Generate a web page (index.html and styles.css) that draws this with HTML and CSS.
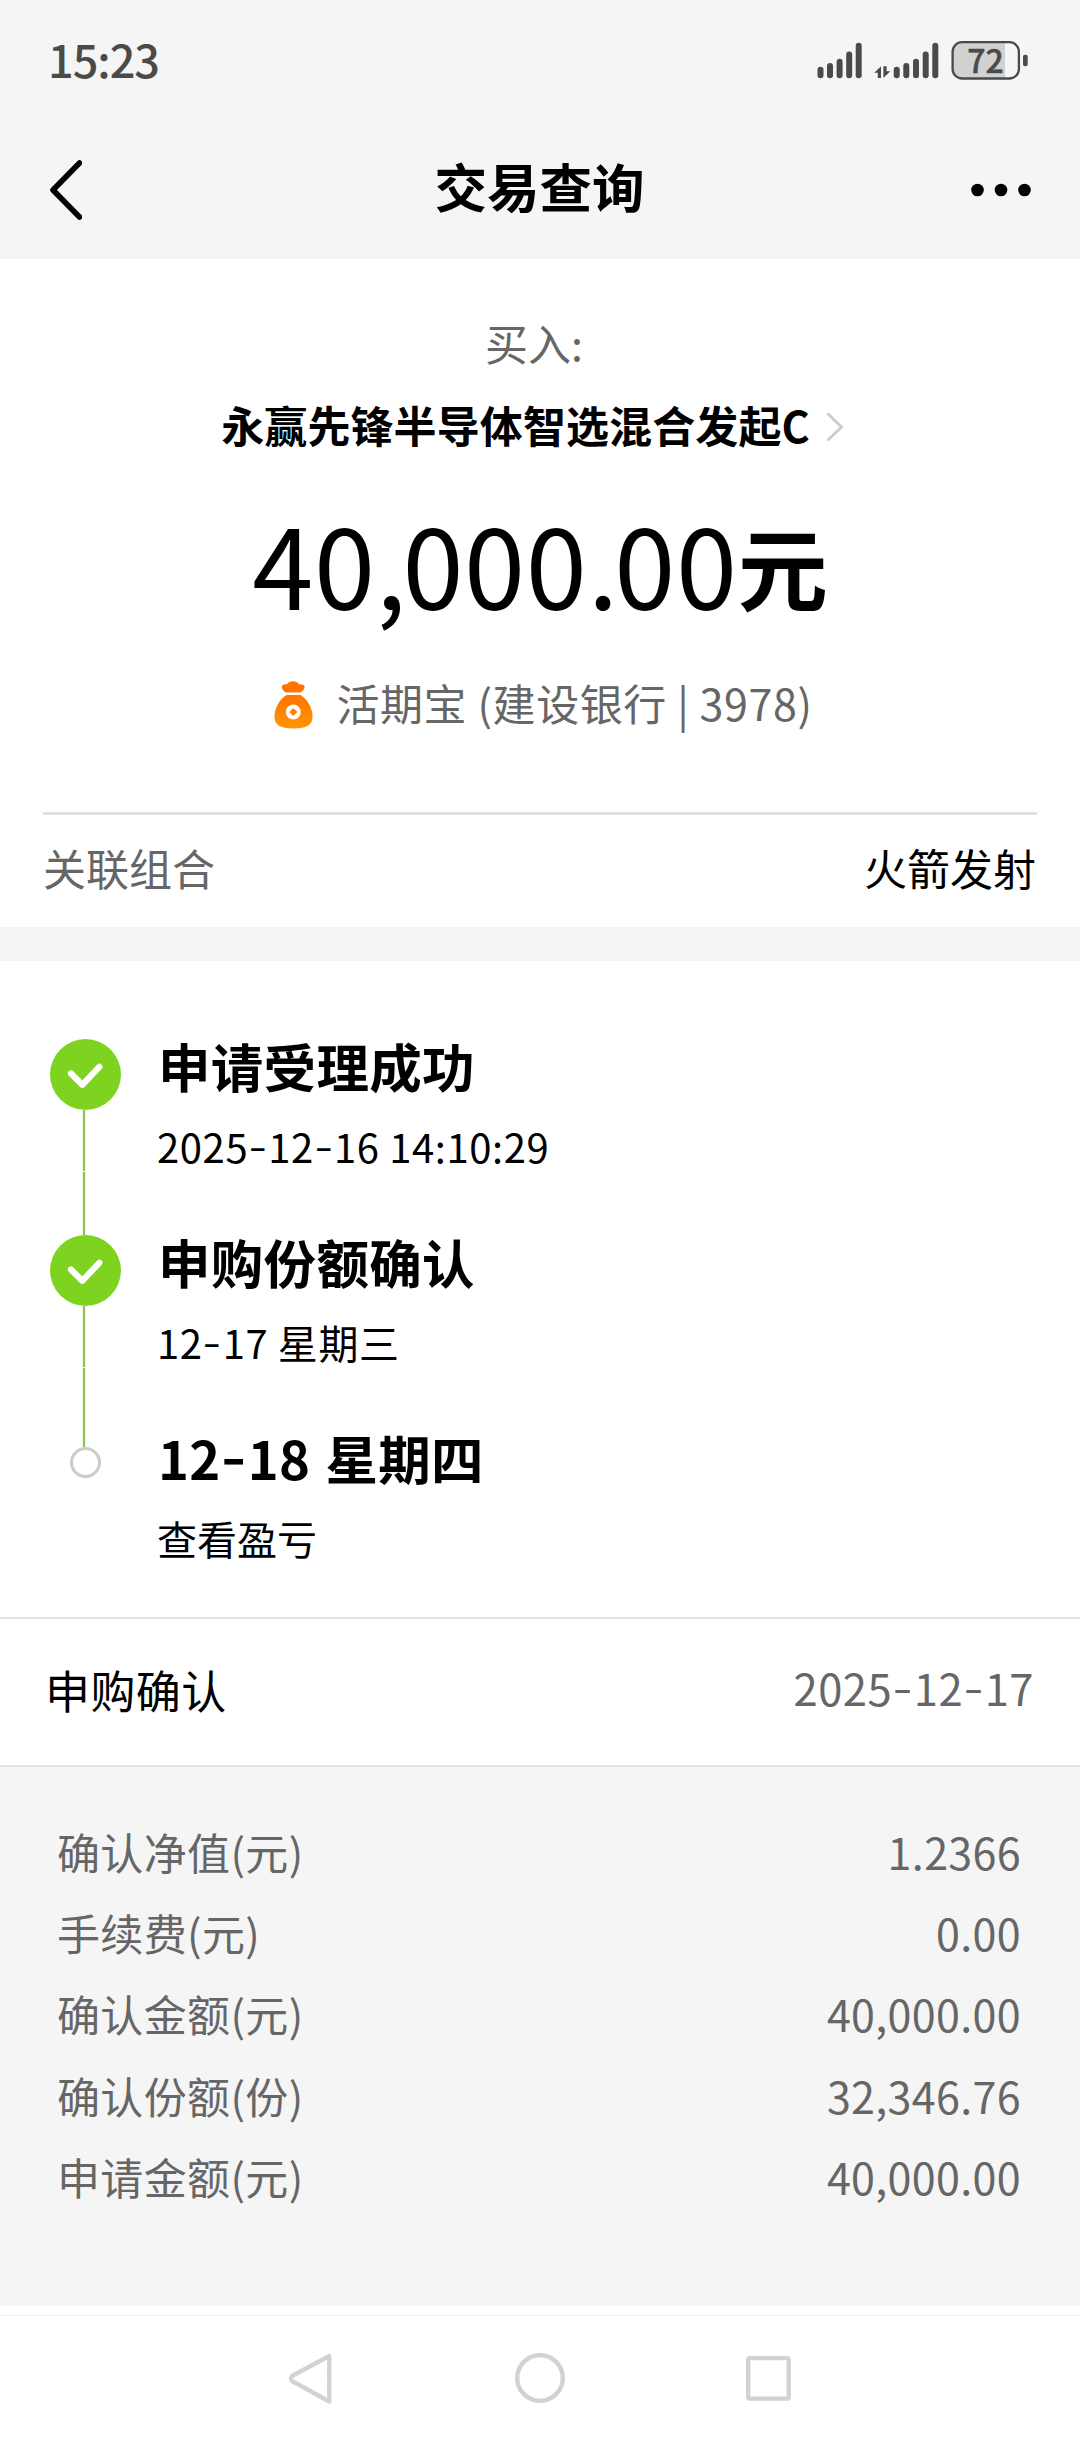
FILE: index.html
```html
<!DOCTYPE html>
<html lang="zh-CN">
<head>
<meta charset="utf-8">
<title>交易查询</title>
<link rel="stylesheet" href="styles.css">
</head>
<body>
<header class="top">
  <div class="status">
    <span class="time">15:23</span>
    <svg class="status-icons" width="212" height="42" viewBox="817 40 212 42">
      <g fill="#4a4a4a">
        <rect x="817.5" y="66.7" width="6" height="11.5" rx="3"/><rect x="827" y="63" width="6" height="15.2" rx="3"/><rect x="836.6" y="58.7" width="6" height="19.5" rx="3"/><rect x="846.2" y="51.5" width="6" height="26.7" rx="3"/><rect x="855.7" y="42.8" width="6" height="35.4" rx="3"/>
        <path d="M874.3 72.800l6.700-6.500v11.700h-3.200v-5.200zM890.300 71.300l-6.900 6.700V66.300h3.200v5z"/>
        <rect x="893.7" y="66.7" width="6" height="11.5" rx="3"/><rect x="903.3" y="63" width="6" height="15.2" rx="3"/><rect x="913" y="58.7" width="6" height="19.5" rx="3"/><rect x="922.7" y="51.5" width="6" height="26.7" rx="3"/><rect x="932.3" y="42.8" width="6" height="35.4" rx="3"/>
        <rect x="1023" y="54.7" width="4.7" height="11.5" rx="1.8"/>
      </g>
      <path d="M1005 43H962a9 9 0 0 0-9 9v17a9 9 0 0 0 9 9h43z" fill="#d1d1d1"/>
      <rect x="952.6" y="42.2" width="66.3" height="36.3" rx="9.5" fill="none" stroke="#4a4a4a" stroke-width="2.3"/>
      <text class="battery" x="985.5" y="73" text-anchor="middle">72</text>
    </svg>
  </div>
  <nav class="titlebar">
    <svg width="34" height="64" viewBox="0 0 34 64" fill="none" stroke="#000" stroke-width="5.6" stroke-linecap="round" stroke-linejoin="round"><path d="M31.5 5L5 32l26.500 27"/></svg>
    <h1 class="title">交易查询</h1>
    <svg width="60" height="14" viewBox="0 0 60 14"><circle cx="6.500" cy="7" r="6.300"/><circle cx="30" cy="7" r="6.300"/><circle cx="53.500" cy="7" r="6.300"/></svg>
  </nav>
</header>

<section class="summary">
  <div class="kind">买入:</div>
  <div class="fund"><span>永赢先锋半导体智选混合发起C</span><svg width="18" height="30" viewBox="0 0 18 30" fill="none" stroke="#ccc" stroke-width="2.800"><path d="M1.500 1.500L15.500 15 1.500 28.500"/></svg></div>
  <div class="amount"><span class="num">40<span class="sep">,</span>000<span class="sep">.</span>00</span><span class="unit">元</span></div>
  <div class="account">
    <svg width="39" height="48" viewBox="0 0 39 48">
      <defs><linearGradient id="bag" x1="0" y1="0" x2="0" y2="1"><stop offset="0" stop-color="#ff7400"/><stop offset="1" stop-color="#ff9600"/></linearGradient></defs>
      <path fill="#ff7400" d="M12 11.500C6 7.500 6.500 2.500 13 3.200 15.500-.6 22.500-.6 25 3.200c7-.7 7.500 4.300 1.500 8.300z"/>
      <path fill="url(#bag)" d="M12.500 14h14C34 18.500 38.500 28 38.500 35.500 38.500 44 33 47.500 19.500 47.500S.5 44 .5 35.500C.5 28 5 18.500 12.500 14z"/>
      <circle cx="19.300" cy="31" r="7.500" fill="#fff"/><path fill="#ff8200" stroke="#ff8200" stroke-linejoin="round" d="M19.300 27.500l3.500 3.500-3.500 3.500-3.500-3.500z"/>
    </svg>
    <span>活期宝 (建设银行 | 3978)</span>
  </div>
  <div class="group"><span class="muted">关联组合</span><span>火箭发射</span></div>
</section>

<section class="steps">
  <div class="step">
    <div class="rail"><svg class="tick" width="71" height="71" viewBox="0 0 71 71"><circle cx="35.500" cy="35.500" r="35.500" fill="#7ed321"/><path d="M21 34.500l11.300 11.300 17-18" fill="none" stroke="#fff" stroke-width="6.200" stroke-linecap="round" stroke-linejoin="round"/></svg><i class="line"></i><i class="line"></i></div>
    <div class="info"><h2>申请受理成功</h2><p class="stamp">2025<span class="dash">-</span>12<span class="dash">-</span>16 14:10:29</p></div>
  </div>
  <div class="step">
    <div class="rail"><svg class="tick" width="71" height="71" viewBox="0 0 71 71"><circle cx="35.500" cy="35.500" r="35.500" fill="#7ed321"/><path d="M21 34.500l11.300 11.300 17-18" fill="none" stroke="#fff" stroke-width="6.200" stroke-linecap="round" stroke-linejoin="round"/></svg><i class="line"></i><i class="line long"></i></div>
    <div class="info"><h2>申购份额确认</h2><p class="stamp">12<span class="dash">-</span>17 星期三</p></div>
  </div>
  <div class="step last">
    <div class="rail"><i class="dot"></i></div>
    <div class="info"><h2 class="date-title">12<span class="dash">-</span>18 星期四</h2><p>查看盈亏</p></div>
  </div>
</section>

<section class="confirm"><span>申购确认</span><span class="confirm-date">2025<span class="dash">-</span>12<span class="dash">-</span>17</span></section>

<section class="details">
  <div class="row"><span>确认净值(元)</span><span>1.2366</span></div>
  <div class="row"><span>手续费(元)</span><span>0.00</span></div>
  <div class="row"><span>确认金额(元)</span><span>40,000.00</span></div>
  <div class="row"><span>确认份额(份)</span><span>32,346.76</span></div>
  <div class="row"><span>申请金额(元)</span><span>40,000.00</span></div>
</section>
<div class="strip"></div>
<footer class="softkeys">
  <svg width="504" height="52" viewBox="288 2352 504 52" fill="none" stroke="#d2d2d2" stroke-width="4.300" stroke-linejoin="round"><path d="M329.300 2356v45.500L292 2381q-2-2.500 0-5z"/><circle cx="540" cy="2378" r="22.800"/><rect x="748.200" y="2358.200" width="40.500" height="40.500" rx="1.500"/></svg>
</footer>
</body>
</html>
```

FILE: styles.css
```css
* { box-sizing: border-box; }
body, h1, h2, p { margin: 0; }
body {
  width: 1080px;
  height: 2440px;
  background: #fff;
  color: #000;
  font-family: "Noto Sans CJK SC", sans-serif;
  font-size: 43px;
  line-height: 60px;
  white-space: nowrap;
}
svg { display: block; flex: none; }
.top { height: 259px; background: #f5f5f5; }
.status { height: 122px; padding: 0 51px 0 48px; display: flex; align-items: center; justify-content: space-between; }
.status-icons { overflow: visible; }
.time { font-size: 45px; font-weight: 500; color: #4a4a4a; letter-spacing: -1px; padding-bottom: 4px; }
.battery { font-size: 32px; line-height: 32px; font-weight: 500; fill: #4a4a4a; stroke: #4a4a4a; stroke-width: 0.5px; }
.titlebar { height: 136px; padding: 0 49px 0 48px; display: grid; grid-template-columns: 60px 1fr 60px; align-items: center; }
.title { font-size: 52.5px; font-weight: 700; text-align: center; line-height: 76px; padding-bottom: 10px; }

.summary { height: 668px; padding: 53px 43px 0; display: flex; flex-direction: column; align-items: center; }
.kind { color: #666; height: 60px; line-height: 60px; padding-right: 12px; }
.fund { display: flex; align-items: center; gap: 16px; height: 60px; margin-top: 22px; font-weight: 700; padding-right: 15px; letter-spacing: 0.1px; }
.fund svg { margin-top: 5px; }
.amount { height: 120px; margin-top: 48px; line-height: 120px; }
.num { font-size: 110px; letter-spacing: 0.7px; }
.sep { letter-spacing: -4px; }
.unit { font-size: 90px; font-weight: 700; line-height: 1; vertical-align: 6px; }
.account { display: flex; align-items: center; gap: 23px; color: #666; height: 60px; margin-top: 53px; padding-left: 7px; letter-spacing: 0.6px; }
.account span { padding-bottom: 7px; }
.group { align-self: stretch; margin-top: 77px; border-top: 3px solid #e0e0e0; height: 115px; display: flex; justify-content: space-between; line-height: 105px; padding-right: 1px; }
.muted { color: #666; }
.dash { display: inline-block; margin: 0 0.07em; transform: translateY(-0.05em) scaleX(1.3); }

.steps { border-top: 34px solid #f4f4f4; height: 690px; padding: 78px 50px 0; }
.step { display: flex; height: 196px; gap: 37px; }
.rail { width: 71px; display: flex; flex-direction: column; align-items: center; }
.line { flex: none; width: 2px; height: 61px; margin: 0 3px 1px 0; background: #8cc152; box-shadow: 0 0 2px #c9f08a; }
.line + .line { height: 63px; margin-bottom: 0; }
.line + .line.long { height: 79px; }
.dot { width: 31px; height: 31px; margin-top: 16px; border: 3px solid #ccc; border-radius: 50%; background: #fff; }
h2 { font-size: 52.5px; font-weight: 700; line-height: 76px; margin-top: -12px; letter-spacing: 0.3px; }
.date-title { word-spacing: 3px; }
.info p { font-size: 40px; line-height: 56px; margin: 15px 0 0 -1px; }
.stamp { letter-spacing: 0.6px; }

.confirm { height: 150px; border-top: 2px solid #e2e2e2; border-bottom: 2px solid #e2e2e2; padding: 0 46px 5px 45px; display: flex; justify-content: space-between; align-items: center; font-size: 45px; letter-spacing: 0.4px; }
.confirm-date { font-size: 43.5px; color: #666; letter-spacing: 0.5px; padding-bottom: 3px; }

.details { height: 539px; padding: 44px 59px 0 57px; background: #f5f5f5; color: #666; letter-spacing: 0.35px; }
.row { display: flex; justify-content: space-between; height: 81.200px; line-height: 81px; }
.strip { height: 10px; border-bottom: 1px solid #f2f2f2; }
.softkeys { height: 124px; display: flex; justify-content: center; padding-top: 36px; }
```
